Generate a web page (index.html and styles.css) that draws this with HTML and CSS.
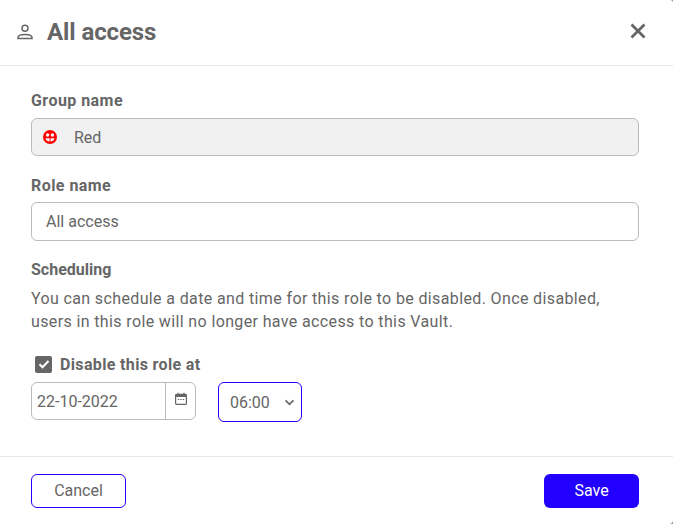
FILE: index.html
```html
<!DOCTYPE html>
<html lang="en">
<head>
<meta charset="UTF-8" />
<meta name="viewport" content="width=device-width, initial-scale=1" />
<title>All access</title>
<link rel="stylesheet" href="styles.css">
</head>
<body>
<div class="modal">
  <div class="modal-header">
    <h1 class="modal-title">
      <svg class="user-icon" viewBox="0 0 18 18" width="18" height="18" fill="none" stroke="#666" stroke-width="1.5">
        <circle cx="9" cy="5.2" r="3"/>
        <path d="M2 15.6v-1c0-2 2.2-3.2 7-3.2s7 1.200 7 3.200v1z"/>
      </svg>
      All access
    </h1>
    <button class="close-btn" aria-label="Close">
      <svg viewBox="0 0 16 16" width="16" height="16" stroke="#666" stroke-width="2.8" fill="none">
        <path d="M1.500 1.500l13 13M14.500 1.500l-13 13"/>
      </svg>
    </button>
  </div>

  <div class="modal-body">
    <label class="field-label label-wide">Group name</label>
    <div class="input input-disabled">
      <svg class="group-icon" viewBox="0 0 14 14" width="14" height="14">
        <circle cx="7" cy="7" r="7" fill="#f00"/>
        <circle cx="4.600" cy="5" r="1.700" fill="#fff"/>
        <circle cx="9.400" cy="5" r="1.700" fill="#fff"/>
        <path d="M2.600 8.200h8.800c-.2 1.700-1.400 3.400-4.400 3.400s-4.200-1.700-4.400-3.400z" fill="#fff"/>
        <path d="M7 8v4" stroke="#f00" stroke-width="1"/>
      </svg>
      <span>Red</span>
    </div>

    <label class="field-label label-wide label-role">Role name</label>
    <input class="input input-role" type="text" value="All access">

    <label class="field-label">Scheduling</label>
    <p class="help-text">You can schedule a date and time for this role to be disabled. Once disabled, users in this role will no longer have access to this Vault.</p>

    <label class="check-row">
      <span class="check-box">
        <svg viewBox="0 0 16 16" width="16" height="16" fill="none" stroke="#fff" stroke-width="2">
          <path d="M3.500 8.300l3 3 6-6.300"/>
        </svg>
      </span>
      Disable this role at
    </label>

    <div class="schedule-row">
      <div class="date-group">
        <input class="date-input" type="text" value="22-10-2022">
        <span class="date-btn">
          <svg viewBox="0 0 14 14" width="14" height="14" fill="none" stroke="#666" stroke-width="1.200">
            <rect x="1.600" y="2.400" width="10.800" height="10" rx="1"/>
            <path d="M1.600 3.800h10.800" stroke-width="2.400"/>
            <path d="M4 .8v2M10 .8v2"/>
            <path d="M3.800 7.500h1.400M6.300 7.500h1.400M8.800 7.500h1.400"/>
          </svg>
        </span>
      </div>
      <div class="time-select">
        <span>06:00</span>
        <svg viewBox="0 0 12 8" width="11" height="7" fill="none" stroke="#666" stroke-width="2">
          <path d="M1.500 1.500l4.500 4.500 4.500-4.500"/>
        </svg>
      </div>
    </div>
  </div>

  <div class="modal-footer">
    <button class="btn btn-outline">Cancel</button>
    <button class="btn btn-primary">Save</button>
  </div>
</div>
</body>
</html>
```

FILE: styles.css
```css
html, body { height: 100%; }
body {
  margin: 0;
  background: #888;
  font-family: Roboto, sans-serif;
  font-size: 16px;
  color: #666;
}
.modal {
  height: 524px;
  background: white;
  border-radius: 0 3px 4px 0;
  display: flex;
  flex-direction: column;
}
.modal-header {
  box-sizing: border-box;
  height: 66px;
  padding: 0 27px 1px 16px;
  border-bottom: 1px solid #e6e6e6;
  display: flex;
  align-items: center;
  justify-content: space-between;
}
.modal-title {
  margin: 0;
  font-size: 24px;
  font-weight: 700;
  letter-spacing: -0.1px;
  display: flex;
  align-items: center;
  gap: 13px;
}
.close-btn {
  border: none;
  background: none;
  padding: 0;
  margin-bottom: 2px;
  display: flex;
}
.modal-body {
  padding: 25px 34px 0 31px;
  flex: 1;
}
.field-label {
  display: block;
  font-weight: 700;
  line-height: 19px;
  margin-bottom: 8px;
}
.label-wide { letter-spacing: 0.45px; }
.label-role { margin-bottom: 7px; }
.input {
  box-sizing: border-box;
  display: flex;
  align-items: center;
  width: 100%;
  height: 38px;
  margin-bottom: 19px;
  padding: 0 14px;
  border: 1px solid #bbb;
  border-radius: 6px;
  background: white;
  font: 16px Roboto, sans-serif;
  color: #666;
}
.input-role { height: 39px; }
.input-disabled { background: #f1f1f1; padding: 0 11px; margin-bottom: 20px; }
.group-icon { margin-right: 17px; }
.help-text {
  margin: 1px 0 22px;
  padding-right: 30px;
  line-height: 23px;
  letter-spacing: 0.37px;
}
.check-row {
  display: flex;
  align-items: center;
  gap: 8px;
  font-weight: 700;
  padding-left: 4px;
  height: 18px;
  margin-bottom: 9px;
  letter-spacing: 0.35px;
}
.check-box {
  width: 17px;
  height: 17px;
  border-radius: 2px;
  background: #666;
  display: flex;
  align-items: center;
  justify-content: center;
}
.schedule-row {
  display: flex;
  align-items: flex-start;
  gap: 22px;
}
.date-group {
  box-sizing: border-box;
  width: 165px;
  height: 38px;
  display: flex;
  border: 1px solid #bbb;
  border-radius: 6px;
}
.date-input {
  box-sizing: border-box;
  width: 134px;
  border: none;
  border-right: 1px solid #bbb;
  background: none;
  padding: 0 5px;
  font: 16px Roboto, sans-serif;
  color: #666;
  border-radius: 6px 0 0 6px;
}
.date-btn {
  flex: 1;
  display: flex;
  align-items: center;
  justify-content: center;
  padding-bottom: 5px;
}
.time-select {
  box-sizing: border-box;
  width: 84px;
  height: 40px;
  border: 1px solid #2200ff;
  border-radius: 6px;
  padding: 0 6px 0 11px;
  display: flex;
  align-items: center;
  justify-content: space-between;
}
.modal-footer {
  box-sizing: border-box;
  height: 68px;
  border-top: 1px solid #e6e6e6;
  padding: 17px 34px 0 31px;
  display: flex;
  justify-content: space-between;
  align-items: flex-start;
}
.btn {
  box-sizing: border-box;
  width: 95px;
  height: 34px;
  padding: 0 0 2px;
  border-radius: 6px;
  font: 16px Roboto, sans-serif;
}
.btn-outline {
  background: white;
  border: 1px solid #2200ff;
  color: #666;
}
.btn-primary {
  background: #2200ff;
  border: none;
  color: white;
}
```
